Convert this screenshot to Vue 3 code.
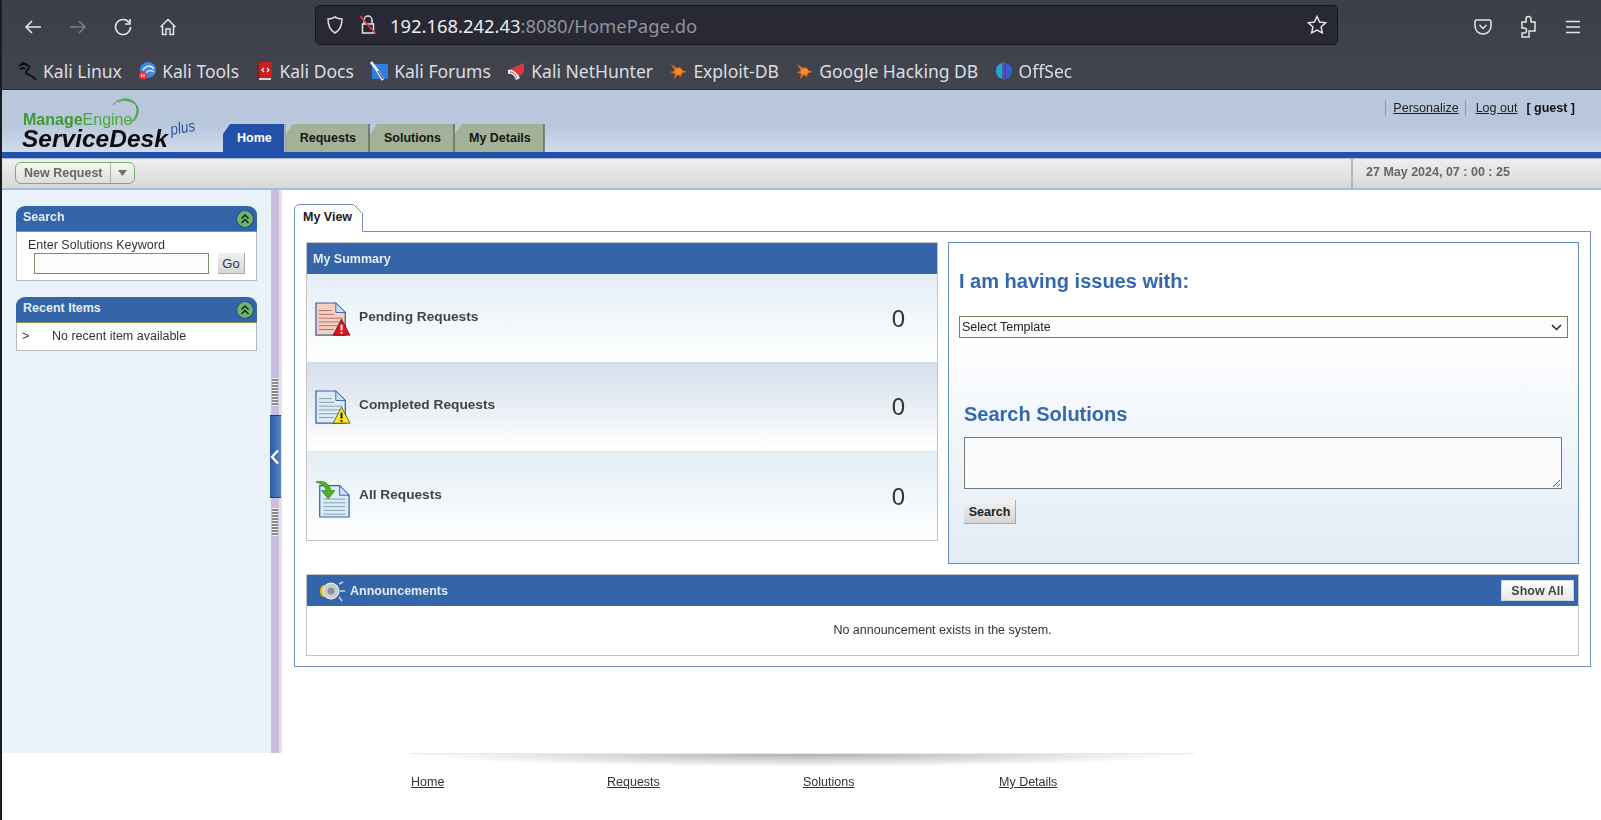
<script setup>
const bookmarks = [
  { name: "Kali Linux", icon: "dragon" },
  { name: "Kali Tools", icon: "tools" },
  { name: "Kali Docs", icon: "docs" },
  { name: "Kali Forums", icon: "forums" },
  { name: "Kali NetHunter", icon: "hunter" },
  { name: "Exploit-DB", icon: "bug" },
  { name: "Google Hacking DB", icon: "bug" },
  { name: "OffSec", icon: "offsec" },
];
const tabs = ["Home", "Requests", "Solutions", "My Details"];
const summary = [
  { label: "Pending Requests", count: 0, type: "pending" },
  { label: "Completed Requests", count: 0, type: "completed" },
  { label: "All Requests", count: 0, type: "all" },
];
const footerLinks = ["Home", "Requests", "Solutions", "My Details"];
</script>

<template>
  <div class="screen">
    <!-- browser toolbar -->
    <div class="browser">
      <div class="nav-row">
        <div class="nav-btns">
          <svg width="20" height="20" viewBox="0 0 20 20" fill="none" stroke="#e4e5e8" stroke-width="1.6"><path d="M18 10H3M9 4l-6 6 6 6" /></svg>
          <svg width="20" height="20" viewBox="0 0 20 20" fill="none" stroke="#7d7f87" stroke-width="1.6"><path d="M2 10h15M11 4l6 6-6 6" /></svg>
          <svg width="20" height="20" viewBox="0 0 20 20" fill="none" stroke="#e4e5e8" stroke-width="1.6"><path d="M16 5.500A7.500 7.500 0 1 0 17.500 10" /><path d="M17 2v5h-5" /></svg>
          <svg width="20" height="20" viewBox="0 0 20 20" fill="none" stroke="#e4e5e8" stroke-width="1.500"><path d="M2.500 10 10 2.500l7.500 7.500M4.500 9v8.500h3.500v-5.500h4v5.500h3.500V9" /></svg>
        </div>
        <div class="urlbar">
          <svg width="20" height="20" viewBox="0 0 20 20" fill="none" stroke="#dfe0e4" stroke-width="1.500"><path d="M10 2c2 1.300 4.500 2 7 2 0 6-1.500 11-7 14C4.500 15 3 10 3 4c2.500 0 5-.7 7-2z" /></svg>
          <svg class="lock" width="20" height="22" viewBox="0 0 20 22" fill="none" stroke="#e4e5e8" stroke-width="1.500"><path d="M6 10V6a4 4 0 0 1 8 0v4M4.500 10h11v9h-11z" /><path d="M2 2l16 18" stroke="#e5364b" stroke-width="1.800" /></svg>
          <span class="url"><span class="host">192.168.242.43</span>:8080/HomePage.do</span>
          <svg class="star" width="22" height="22" viewBox="0 0 22 22" fill="none" stroke="#e4e5e8" stroke-width="1.500"><path d="M11 2.500l2.600 5.600 6 .7-4.500 4.100 1.200 6L11 16l-5.300 2.900 1.200-6L2.400 8.800l6-.7z" /></svg>
        </div>
        <div class="nav-tools">
          <svg width="20" height="20" viewBox="0 0 20 20" fill="none" stroke="#e4e5e8" stroke-width="1.500"><path d="M3.500 3h13a1.500 1.500 0 0 1 1.500 1.500V9a8 8 0 0 1-16 0V4.500A1.500 1.500 0 0 1 3.500 3z" /><path d="M6.500 8 10 11.500 13.500 8" /></svg>
          <svg width="20" height="24" viewBox="0 0 20 24" fill="none" stroke="#e4e5e8" stroke-width="1.500"><path d="M4 7h4V4a2.500 2.500 0 0 1 5 0v3h4v9h-6v6H4v-4h2a2.500 2.500 0 0 0 0-5H4z" /></svg>
          <svg width="20" height="20" viewBox="0 0 20 20" fill="none" stroke="#e4e5e8" stroke-width="1.600"><path d="M3 4.500h14M3 10h14M3 15.500h14" /></svg>
        </div>
      </div>
      <div class="bookmarks">
        <div v-for="b in bookmarks" :key="b.name" class="bookmark">
          <svg width="20" height="20" viewBox="0 0 20 20">
            <g v-if="b.icon === 'dragon'" fill="none" stroke="#0b0b0e" stroke-width="1.700"><path d="M1 5c4-3 8-2 10 0 2 3-4 4-3 7 1 2 6 1 10 7" /><path d="M3 2c3 0 5 1 6 3M2 8c2-1 4-1 5 0" /></g>
            <g v-else-if="b.icon === 'tools'"><circle cx="11" cy="9" r="8" fill="#3f86e3" /><path d="M6 9c3-5 8-5 11-1M9 12c2-3 5-3 8-1" fill="none" stroke="#e5eefb" stroke-width="1.500" /><circle cx="6" cy="14.500" r="4" fill="#e5363c" /><path d="M4.800 13v3M7 13v3" stroke="#fff" /></g>
            <g v-else-if="b.icon === 'docs'"><rect x="4" y="1" width="14" height="16" fill="#c8201f" /><rect x="3" y="1" width="2" height="18" fill="#7c1c2b" /><rect x="5" y="17" width="12" height="2" fill="#d8d8e0" /><path d="M10 7 8 9l2 2M13 7l2 2-2 2" fill="none" stroke="#fff" stroke-width="1.200" /></g>
            <g v-else-if="b.icon === 'forums'"><rect x="3" y="3" width="16" height="15" rx="1" fill="#2f7de1" /><path d="M2 1l6 8 6 10" fill="none" stroke="#eef2f7" stroke-width="2.800" /><path d="M9 10l5 8" stroke="#21242c" stroke-width="1" /></g>
            <g v-else-if="b.icon === 'hunter'"><path d="M2 9 18 2v9l-7 7z" fill="#d93a3f" /><path d="M2 9c4-1 8 1 12 8l-4 2C8 14 6 12 2 13z" fill="#eceef2" /><path d="M4 11c3 0 5 2 7 6" fill="none" stroke="#d93a3f" /></g>
            <g v-else-if="b.icon === 'bug'"><path d="M3 3l6 4 3-1 2 3 5 2-5 1-1 4-3-2-4 4 1-5-5-2 5-1z" fill="#e8691b" /><ellipse cx="10.500" cy="10.500" rx="4" ry="3" fill="#f48a2c" /></g>
            <g v-else><path d="M8.500 2C4 3 2 6.500 2 10s2 7 6.500 8z" fill="#27a3d4" /><path d="M11.500 2C16 3 18 6.500 18 10s-2 7-6.500 8z" fill="#2f60cf" /><rect x="9.200" y="1" width="1.600" height="18" fill="#7a3dd0" /></g>
          </svg>
          <span>{{ b.name }}</span>
        </div>
      </div>
    </div>

    <!-- app header -->
    <div class="app-header">
      <div class="logo">
        <svg class="swoosh" width="28" height="28" viewBox="0 0 28 28" fill="none" stroke="#3f9e3a" stroke-width=".9"><path d="M1 7C5 1 15-1 21 3c6 5 6 15-4 23" /><path d="M6 4c6-3 14-2 18 3 3 5 1 12-5 18" /><path d="M12 2c6 0 12 3 14 8 1 5-1 10-4 13" /></svg>
        <div class="me"><b>Manage</b>Engine</div>
        <div class="sd">ServiceDesk</div>
        <div class="plus">plus</div>
      </div>
      <div class="tabs">
        <div v-for="(t, i) in tabs" :key="t" class="tab" :class="{ active: i === 0 }">{{ t }}</div>
      </div>
      <div class="user-links">
        <a class="sep">Personalize</a>
        <a class="sep second">Log out</a>
        <b>[ guest ]</b>
      </div>
    </div>
    <div class="blue-bar"></div>

    <div class="action-bar">
      <div class="new-request">
        <span>New Request</span>
        <i><svg width="11" height="8" viewBox="0 0 11 8"><path d="M1 1h9L5.500 7z" fill="#6c7360" /></svg></i>
      </div>
      <div class="clock">27 May 2024, 07 : 00 : 25</div>
    </div>

    <div class="body-row">
      <aside class="sidebar">
        <section class="side-panel">
          <header>
            <span>Search</span>
            <svg width="20" height="20" viewBox="0 0 20 20"><circle cx="10" cy="10" r="8.500" fill="#6fb46f" stroke="#24508f" stroke-width="1.200" /><path d="M6.500 9.500 10 6l3.500 3.500M6.500 14 10 10.500l3.500 3.500" fill="none" stroke="#10240f" stroke-width="1.500" /></svg>
          </header>
          <div class="search-body">
            <div>Enter Solutions Keyword</div>
            <div class="search-row">
              <input type="text" />
              <button>Go</button>
            </div>
          </div>
        </section>
        <section class="side-panel">
          <header>
            <span>Recent Items</span>
            <svg width="20" height="20" viewBox="0 0 20 20"><circle cx="10" cy="10" r="8.500" fill="#6fb46f" stroke="#24508f" stroke-width="1.200" /><path d="M6.500 9.500 10 6l3.500 3.500M6.500 14 10 10.500l3.500 3.500" fill="none" stroke="#10240f" stroke-width="1.500" /></svg>
          </header>
          <div class="recent-body"><span>&gt;</span>No recent item available</div>
        </section>
      </aside>

      <div class="splitter">
        <div class="grip"></div>
        <div class="handle">
          <svg width="10" height="16" viewBox="0 0 10 16"><path d="M8 1.500 2 8l6 6.500" fill="none" stroke="#fff" stroke-width="2.400" /></svg>
        </div>
        <div class="grip"></div>
      </div>

      <main class="content">
        <div class="view-tab">
          My View
          <svg class="tab-edge" width="71" height="28" viewBox="0 0 71 28" fill="none" stroke="#6f8fc6"><path d="M.5 28V5.500a5 5 0 0 1 5-5H59.500l9 9V27.500H71" /></svg>
        </div>
        <div class="view-panel">
          <div class="view-top">
            <section class="summary">
              <header>My Summary</header>
              <div v-for="row in summary" :key="row.label" class="sum-row" :class="row.type">
                <svg class="doc" width="36" height="38" viewBox="0 0 38 40">
                  <g v-if="row.type !== 'all'">
                    <path d="M1 1h21l10 10v24H1z" :fill="row.type === 'pending' ? '#f4cfc4' : '#dcecf4'" stroke="#3c5fa6" stroke-width="1.300" />
                    <path d="M22 1v10h10z" fill="#cfe3f6" stroke="#3c5fa6" />
                    <path d="M4 9h14M4 13h16M4 17h25M4 21h25M4 25h20M4 29h16" :stroke="row.type === 'pending' ? '#b66a60' : '#7f9fb0'" />
                    <path d="M28 18l9 17H19z" :fill="row.type === 'pending' ? '#e5111d' : '#f7e61a'" stroke="#222" stroke-width=".7" />
                    <path d="M28 24v6M28 31.500v2" :stroke="row.type === 'pending' ? '#fff' : '#111'" stroke-width="2" />
                  </g>
                  <g v-else>
                    <path d="M5 6h21l10 10v23H5z" fill="#dcecf4" stroke="#3c5fa6" stroke-width="1.300" />
                    <path d="M26 6v10h10z" fill="#cfe3f6" stroke="#3c5fa6" />
                    <path d="M9 20h23M9 24h23M9 28h23M9 32h23M9 36h23" stroke="#7f9fb0" />
                    <path d="M1 2c8-2 14 1 16 9h4l-7 9-7-9h5C11 7 7 4 1 2z" fill="#4fae2e" stroke="#2f7d1c" stroke-width=".7" />
                  </g>
                </svg>
                <span class="sum-label">{{ row.label }}</span>
                <span class="sum-count">{{ row.count }}</span>
              </div>
            </section>
            <section class="issues">
              <h2 class="issues-title">I am having issues with:</h2>
              <div class="template-wrap">
                <select class="template"><option>Select Template</option></select>
                <svg class="chevron" width="11" height="7" viewBox="0 0 11 7"><path d="M1 1l4.500 4.500L10 1" fill="none" stroke="#222" stroke-width="1.500" /></svg>
              </div>
              <h2 class="solutions-title">Search Solutions</h2>
              <textarea class="solutions-box"></textarea>
              <button class="search-btn">Search</button>
            </section>
          </div>
          <section class="announce">
            <header>
              <svg width="30" height="24" viewBox="0 0 30 24">
                <path d="M20 5l4-2M21 12h5M20 18l3 4" stroke="#cfd8e6" stroke-width="1.400" />
                <ellipse cx="5" cy="12" rx="4" ry="6" fill="#e8b81d" />
                <circle cx="12" cy="12" r="8" fill="#c8ccd2" stroke="#f1f3f6" />
                <circle cx="12" cy="12" r="3.500" fill="#8b929c" />
              </svg>
              <span>Announcements</span>
              <button class="show-all">Show All</button>
            </header>
            <div class="announce-body">No announcement exists in the system.</div>
          </section>
        </div>
      </main>
    </div>

    <footer class="page-footer">
      <div class="shadow-line"></div>
      <div class="foot-links">
        <a v-for="l in footerLinks" :key="l">{{ l }}</a>
      </div>
    </footer>
  </div>
</template>

<style>
html, body { margin: 0; background: #fff; overflow: hidden; }
</style>

<style scoped>
.screen {
  width: 1601px;
  height: 820px;
  overflow: hidden;
  display: flex;
  flex-direction: column;
  font-family: "Liberation Sans", Arial, sans-serif;
  font-size: 12.500px;
  color: #333;
  border-left: 2px solid #1b1c22;
  box-sizing: border-box;
  filter: blur(.35px);
}
.browser {
  height: 90px;
  flex: none;
  background: linear-gradient(#3d3f48, #43454e);
  border-bottom: 1px solid #2a2b31;
  box-sizing: border-box;
  color: #dcdde0;
}
.nav-row {
  height: 50px;
  display: flex;
  align-items: center;
}
.nav-btns {
  width: 313px;
  flex: none;
  display: flex;
  gap: 25px;
  padding: 4px 0 0 21px;
  box-sizing: border-box;
}
.urlbar {
  width: 1023px;
  height: 40px;
  flex: none;
  box-sizing: border-box;
  background: #282935;
  border: 1px solid #17181d;
  border-radius: 5px;
  display: flex;
  align-items: center;
  padding: 0 9px;
}
.lock { margin-left: 13px; }
.url {
  margin: 1px 0 0 12px;
  font-family: "Noto Sans", sans-serif;
  font-size: 18.400px;
  color: #91939b;
}
.host { color: #eceded; }
.star { margin-left: auto; }
.nav-tools {
  flex: 1;
  display: flex;
  align-items: center;
  gap: 25px;
  padding: 4px 0 0 135px;
}
.bookmarks {
  height: 39px;
  display: flex;
  align-items: center;
  gap: 15.400px;
  padding: 2px 0 0 16px;
  box-sizing: border-box;
}
.bookmark {
  display: flex;
  align-items: center;
  gap: 5px;
  font-family: "Noto Sans", sans-serif;
  font-size: 17.500px;
}
.app-header {
  height: 62px;
  flex: none;
  position: relative;
  background: linear-gradient(#b8c7dc 55%, #cfdceb);
  display: flex;
  align-items: flex-end;
}
.logo {
  width: 223px;
  height: 62px;
  flex: none;
  position: relative;
  margin-left: -2px;
}
.swoosh { position: absolute; left: 112px; top: 8px; }
.me {
  position: absolute;
  left: 23px;
  top: 21px;
  font-size: 16px;
  color: #4fa93a;
}
.me b { color: #3d9a2c; }
.sd {
  position: absolute;
  left: 22px;
  top: 35px;
  font-size: 24.500px;
  line-height: 28px;
  font-weight: bold;
  font-style: italic;
  color: #0c0c0c;
}
.plus {
  position: absolute;
  left: 168px;
  top: 29px;
  font-size: 16px;
  font-style: italic;
  color: #2b56a4;
  transform: rotate(-10deg) scaleX(.85);
}
.tabs { display: flex; }
.tab {
  height: 28px;
  line-height: 28px;
  padding: 0 12px 0 14px;
  font-weight: bold;
  color: #161616;
  background: #a3b199;
  border-right: 2px solid #737d6d;
  box-sizing: border-box;
  clip-path: polygon(7px 0, 100% 0, 100% 100%, 0 100%, 0 10px);
}
.tab.active {
  background: #2350a8;
  color: #fff;
  border-right-color: #a9b5c8;
}
.user-links {
  position: absolute;
  right: 26px;
  top: 10px;
  display: flex;
  line-height: 16px;
}
.user-links a {
  text-decoration: underline;
  color: #222;
}
.user-links a.sep {
  border-left: 1px solid #8e9aab;
  padding-left: 7px;
  margin-right: 6px;
}
.user-links a.second { padding-left: 10px; margin-right: 9px; }
.user-links b { color: #111; }
.blue-bar {
  height: 6px;
  flex: none;
  background: #2350a8;
  border-bottom: 1px solid #a9bbd6;
}
.action-bar {
  height: 31px;
  flex: none;
  box-sizing: border-box;
  display: flex;
  align-items: center;
  justify-content: space-between;
  background: linear-gradient(#eeeeee, #d8d8d8);
  border-bottom: 2px solid #a3bde4;
  padding-left: 13px;
}
.new-request {
  height: 22px;
  margin-top: -2px;
  display: flex;
  align-items: center;
  border: 1px solid #79b06d;
  border-radius: 6px;
  background: linear-gradient(#f5f7f2, #dcdfd6);
  color: #636b5e;
  font-weight: bold;
  box-sizing: border-box;
}
.new-request span {
  padding: 0 7px 0 8px;
  border-right: 1px solid #a9b3a1;
  line-height: 20px;
}
.new-request i {
  width: 23px;
  display: flex;
  justify-content: center;
}
.clock {
  width: 250px;
  height: 29px;
  line-height: 27px;
  box-sizing: border-box;
  border-left: 2px solid #b4b4b4;
  padding-left: 13px;
  font-weight: bold;
  color: #666;
}
.body-row {
  height: 563px;
  flex: none;
  display: flex;
}
.sidebar {
  width: 269px;
  flex: none;
  background: #e9f1f9;
  padding: 16px 14px 0 14px;
  box-sizing: border-box;
  display: flex;
  flex-direction: column;
  gap: 16px;
}
.side-panel {
  width: 241px;
  border: 1px solid #b6b9bd;
  border-top: 0;
  border-radius: 9px 9px 0 0;
  background: #fff;
  box-sizing: border-box;
}
.side-panel header {
  height: 26px;
  margin: 0 -1px;
  background: #3465a8;
  border-radius: 9px 9px 0 0;
  border-bottom: 1px solid #7e9a66;
  box-sizing: border-box;
  display: flex;
  align-items: center;
  justify-content: space-between;
  padding: 0 2px 0 7px;
  color: #e3ebf6;
  font-weight: bold;
}
.side-panel header span { margin-top: -3px; }
.search-body {
  height: 48px;
  padding: 6px 11px 0 11px;
  box-sizing: border-box;
  color: #333;
  line-height: 14px;
}
.search-row {
  display: flex;
  align-items: center;
  justify-content: space-between;
  margin: 1px 0 0 6px;
}
.search-row input {
  width: 175px;
  height: 21px;
  box-sizing: border-box;
  border: 1px solid #7e8f63;
  background: #fcfcfa;
  padding: 0;
}
.search-row button {
  width: 27px;
  height: 21px;
  padding: 0;
  font: 13px "Liberation Sans", sans-serif;
  color: #333;
  background: linear-gradient(#f0f0f0, #d6d6d6);
  border: 0;
  border-right: 1px solid #aaa;
  border-bottom: 1px solid #aaa;
}
.recent-body {
  height: 27px;
  line-height: 26px;
  padding-left: 5px;
}
.recent-body span { display: inline-block; width: 30px; }
.splitter {
  width: 11px;
  flex: none;
  background: #c9bedd;
  border-right: 3px solid #e4e4e8;
  box-sizing: border-box;
  display: flex;
  flex-direction: column;
  align-items: center;
  padding-top: 188px;
}
.grip {
  width: 6px;
  height: 28px;
  background: repeating-linear-gradient(#f2f2f2 0 1px, #8a8a90 1px 3px);
}
.handle {
  width: 11px;
  height: 83px;
  margin: 9px 0 10px;
  flex: none;
  background: linear-gradient(90deg, #2a5aa6, #5a87c4);
  border-top: 1px solid #1d3f80;
  border-bottom: 1px solid #1d3f80;
  box-sizing: border-box;
  display: flex;
  align-items: center;
  justify-content: center;
}
.content {
  flex: 1;
  padding: 14px 10px 0 12px;
  box-sizing: border-box;
}
.view-tab {
  width: 71px;
  height: 28px;
  position: relative;
  z-index: 1;
  box-sizing: border-box;
  padding: 6px 0 0 9px;
  background: #fff;
  font-weight: bold;
  color: #222;
  margin-bottom: -1px;
}
.tab-edge { position: absolute; left: 0; top: 0; }
.view-panel {
  height: 436px;
  box-sizing: border-box;
  border: 1px solid #6f8fc6;
  padding: 10px 11px 0 11px;
}
.view-top {
  display: flex;
  gap: 10px;
  align-items: flex-start;
}
.summary {
  width: 632px;
  height: 299px;
  border: 1px solid #c4c4c4;
  box-sizing: border-box;
  flex: none;
  display: flex;
  flex-direction: column;
}
.summary > header {
  height: 31px;
  line-height: 32px;
  flex: none;
  background: #3465a8;
  color: #e3ebf6;
  font-weight: bold;
  padding-left: 6px;
}
.sum-row {
  flex: 1;
  display: flex;
  align-items: flex-start;
  padding: 28px 32px 0 8px;
  box-sizing: border-box;
  background: linear-gradient(#e3eef5, #fff);
}
.sum-row.completed {
  background: linear-gradient(#d4deeb, #fff);
  border-bottom: 1px solid #f1dfe2;
}
.doc { flex: none; }
.sum-label {
  margin: 7px 0 0 8px;
  font-size: 13.700px;
  font-weight: bold;
  color: #444;
}
.sum-count {
  margin-left: auto;
  margin-top: 3px;
  font-size: 24px;
  color: #333;
}
.issues {
  flex: 1;
  height: 322px;
  box-sizing: border-box;
  border: 1px solid #6a8fc3;
  background: linear-gradient(#fff 25%, #e2ecf6);
  padding: 26px 10px 0 10px;
  display: flex;
  flex-direction: column;
  align-items: flex-start;
}
.issues h2 {
  margin: 0;
  font-size: 20px;
  line-height: 24px;
  color: #3467ad;
}
.template-wrap {
  width: 100%;
  height: 22px;
  margin-top: 23px;
  position: relative;
}
.template {
  width: 100%;
  height: 22px;
  box-sizing: border-box;
  border: 1px solid #72825a;
  background: #fcfcfa;
  font: 12.500px "Liberation Sans", sans-serif;
  color: #222;
  padding: 0 0 0 2px;
  border-radius: 0;
  appearance: none;
}
.chevron { position: absolute; right: 6px; top: 8px; }
.solutions-title { margin: 64px 0 0 5px !important; }
.solutions-box {
  width: 598px;
  height: 52px;
  margin: 11px 0 0 5px;
  box-sizing: border-box;
  border: 1px solid #777;
  background: #fbfbfb;
  padding: 0;
  border-radius: 0;
}
.search-btn {
  margin: 11px 0 0 5px;
  width: 52px;
  height: 24px;
  padding: 0;
  border: 0;
  border-right: 1px solid #aaa;
  border-bottom: 1px solid #aaa;
  background: linear-gradient(#f2f2f2, #d4d4d4);
  font: bold 12.500px "Liberation Sans", sans-serif;
  color: #222;
}
.announce {
  margin-top: 10px;
  height: 82px;
  border: 1px solid #c4c4c4;
  box-sizing: border-box;
}
.announce > header {
  height: 31px;
  background: #3465a8;
  display: flex;
  align-items: center;
  padding: 0 4px 0 12px;
  gap: 1px;
  color: #e3ebf6;
  font-weight: bold;
}
.show-all {
  margin-left: auto;
  width: 73px;
  height: 21px;
  padding: 0;
  border: 1px solid #cfd5dd;
  background: linear-gradient(#fff, #e8e8e8);
  font: bold 12.500px "Liberation Sans", sans-serif;
  color: #444;
}
.announce-body {
  text-align: center;
  line-height: 49px;
  color: #333;
}
.page-footer {
  flex: 1;
  background: #fff;
}
.shadow-line {
  width: 783px;
  height: 14px;
  margin-left: 409px;
  border-top: 1px solid #e8e8e8;
  box-sizing: border-box;
  background: radial-gradient(50% 100% at 50% 0, #b0b0ae, rgba(255,255,255,0) 100%);
}
.foot-links {
  display: flex;
  margin: 8px 0 0 409px;
}
.foot-links a {
  width: 196px;
  text-decoration: underline;
  color: #333;
}
</style>
